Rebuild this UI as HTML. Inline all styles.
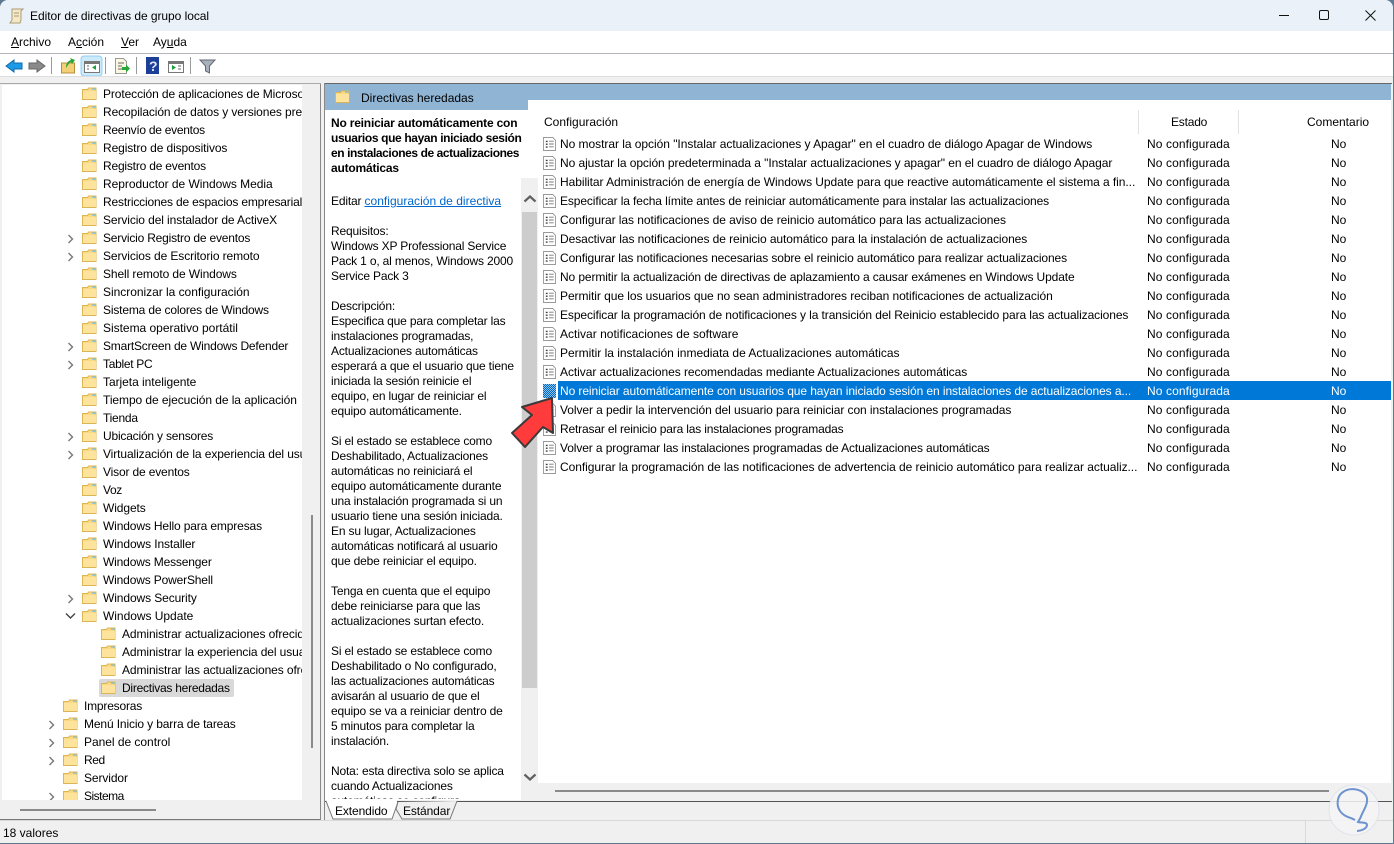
<!DOCTYPE html>
<html lang="es"><head><meta charset="utf-8"><title>Editor de directivas de grupo local</title>
<style>
*{box-sizing:border-box}
html,body{margin:0;padding:0;width:1394px;height:844px;overflow:hidden;background:#5f7a90}
body{font:12px/18px "Liberation Sans",Arial,sans-serif;color:#000}
#w{position:absolute;left:0;top:0;width:1393px;height:843px;background:#f0f0f0;border-radius:8px 8px 0 0;overflow:hidden}
.a{position:absolute}
.t{position:absolute;white-space:nowrap}
#tree{position:absolute;left:2px;top:85px;width:300px;height:715px;background:#fff;overflow:hidden}
#tree div{position:absolute;height:18px;white-space:nowrap;letter-spacing:-.1px}
#tree svg{position:absolute}
#desc{position:absolute;left:331px;top:116px;width:192px;height:683px;overflow:hidden;line-height:15px;white-space:nowrap;letter-spacing:-.17px}
#desc b{letter-spacing:-.2px}
#desc a{color:#0066cc;text-decoration:underline;letter-spacing:.02px}
.r{position:absolute;left:0;width:863px;height:19px;line-height:19px;white-space:nowrap}
.r svg{position:absolute;left:15px;top:3px}
.r .n{position:absolute;left:32px;top:1px}
.r .s{position:absolute;left:619px;top:1px;letter-spacing:.1px}
.r .c{position:absolute;left:803px;top:1px}
</style></head><body>
<svg width="0" height="0" style="position:absolute"><defs>
<symbol id="f" viewBox="0 0 15 14"><path d="M.5 2.500h5l1-1.500h7.500v11.500H.5z" fill="#fbd982" stroke="#dcb655"/><path d="M1 4h13v8H1z" fill="#fde39c"/><path d="M10 1.500h3.500v1.300H10z" fill="#7cc4e8"/></symbol>
<symbol id="d" viewBox="0 0 14 15"><path d="M.5.500h10l3 3v11H.500z" fill="#fff" stroke="#999"/><path d="M3 4h2v1.500H3zM3 7h2v1.500H3zM3 10h2v1.500H3z" fill="#444"/><path d="M6.500 4.500h5M6.500 7.500h5M6.500 10.500h5" stroke="#777" fill="none"/></symbol>
<symbol id="cr" viewBox="0 0 8 10"><path d="M1.500 1l4 4-4 4" fill="none" stroke="#777" stroke-width="1.400"/></symbol>
<pattern id="dt" width="2" height="2" patternUnits="userSpaceOnUse"><rect width="2" height="2" fill="#8cc4f0"/><rect width="1" height="1" fill="#0068c4"/><rect x="1" y="1" width="1" height="1" fill="#0068c4"/></pattern>
</defs></svg>
<div id="w">
<div class="a" style="left:0;top:0;width:1393px;height:31px;background:#eaf1f8"></div>
<svg class="a" style="left:9px;top:8px" width="15" height="16"><path d="M3 1h11l-2 2v9l-1 3H1l2-3z" fill="#f4e9c4" stroke="#a99d77"/><path d="M5 5h5M5 8h5" stroke="#a99d77"/></svg>
<div class="t" style="left:30px;top:7px;letter-spacing:-.05px">Editor de directivas de grupo local</div>
<svg class="a" style="left:1270px;top:5px" width="115" height="22" fill="none" stroke="#111"><path d="M9 10.500h10"/><rect x="49.500" y="5.500" width="9" height="9" rx="1.500"/><path d="M95.500 5.500l10 10M105.500 5.500l-10 10"/></svg>
<div class="a" style="left:0;top:31px;width:1393px;height:22px;background:#fff"></div>
<div class="t" style="left:11px;top:33px"><u>A</u>rchivo</div>
<div class="t" style="left:68px;top:33px">A<u>c</u>ción</div>
<div class="t" style="left:121px;top:33px"><u>V</u>er</div>
<div class="t" style="left:153px;top:33px">Ay<u>u</u>da</div>
<div class="a" style="left:0;top:53px;width:1393px;height:1px;background:#b4b4bc"></div>
<div class="a" style="left:0;top:54px;width:1393px;height:22px;background:#fff"></div>
<div class="a" style="left:0;top:76px;width:1393px;height:1px;background:#dedede"></div>
<svg class="a" style="left:0;top:54px" width="225" height="22">
<path d="M6 12l8-6v3h8v6h-8v3z" fill="#1b9ae8" stroke="#1469a8"/>
<path d="M45 12l-8-6v3h-8v6h8v3z" fill="#8a8a8a" stroke="#666"/>
<path d="M51.500 3v17M105.500 3v17M136.500 3v17M190.500 3v17" stroke="#9a9a9a"/>
<path d="M61.500 9h13v10h-13z" fill="#f3cf76" stroke="#b98f3c"/><path d="M66 14c0-5 2-7 5-8l-1-2 5 2-3 4-1-2c-2 1-3 3-5 6z" fill="#2aa53a"/>
<rect x="81" y="2" width="21" height="20" rx="3" fill="#cdeafb" stroke="#8cd0f5"/>
<path d="M84.500 7.500h15v11h-15z" fill="#fff" stroke="#777"/><path d="M85 8h14v2H85z" fill="#777"/><path d="M87 12h2M87 15h2" stroke="#666"/><path d="M96 11l-4 2.500 4 2.500z" fill="#1f9d3a"/>
<path d="M115.500 4.500h8l3 3v12h-11z" fill="#fbf7e3" stroke="#999"/><path d="M118 9h6M118 12h4M118 15h4" stroke="#666"/><path d="M122 13h4v-2.500l4 4-4 4V16h-4z" fill="#2aa53a"/>
<rect x="146" y="3" width="13" height="17" fill="#1d3f97"/><text x="149" y="17" font-size="14" font-weight="bold" fill="#dfe7fa" font-family="Liberation Sans">?</text>
<path d="M168.500 7.500h15v11h-15z" fill="#fff" stroke="#777"/><path d="M169 8h14v2h-14z" fill="#777"/><path d="M178 12h3M178 15h3" stroke="#666"/><path d="M172 11l4 2.500-4 2.500z" fill="#1f9d3a"/>
<path d="M200 6h15l-5.500 6v7l-4-2v-5z" fill="#a8b2bc" stroke="#667"/>
</svg>
<div id="tree">
<div style="left:101px;top:0">Protección de aplicaciones de Microsoft Defender</div><svg style="left:80px;top:2px" width="15" height="14"><use href="#f"/></svg>
<div style="left:101px;top:18px">Recopilación de datos y versiones preliminares</div><svg style="left:80px;top:20px" width="15" height="14"><use href="#f"/></svg>
<div style="left:101px;top:36px;letter-spacing:-.27px">Reenvío de eventos</div><svg style="left:80px;top:38px" width="15" height="14"><use href="#f"/></svg>
<div style="left:101px;top:54px">Registro de dispositivos</div><svg style="left:80px;top:56px" width="15" height="14"><use href="#f"/></svg>
<div style="left:101px;top:72px;letter-spacing:-.2px">Registro de eventos</div><svg style="left:80px;top:74px" width="15" height="14"><use href="#f"/></svg>
<div style="left:101px;top:90px;letter-spacing:-.04px">Reproductor de Windows Media</div><svg style="left:80px;top:92px" width="15" height="14"><use href="#f"/></svg>
<div style="left:101px;top:108px;letter-spacing:-.17px">Restricciones de espacios empresariales</div><svg style="left:80px;top:110px" width="15" height="14"><use href="#f"/></svg>
<div style="left:101px;top:126px">Servicio del instalador de ActiveX</div><svg style="left:80px;top:128px" width="15" height="14"><use href="#f"/></svg>
<div style="left:101px;top:144px;letter-spacing:-.2px">Servicio Registro de eventos</div><svg style="left:80px;top:146px" width="15" height="14"><use href="#f"/></svg><svg style="left:65px;top:149px" width="8" height="10"><use href="#cr"/></svg>
<div style="left:101px;top:162px">Servicios de Escritorio remoto</div><svg style="left:80px;top:164px" width="15" height="14"><use href="#f"/></svg><svg style="left:65px;top:167px" width="8" height="10"><use href="#cr"/></svg>
<div style="left:101px;top:180px">Shell remoto de Windows</div><svg style="left:80px;top:182px" width="15" height="14"><use href="#f"/></svg>
<div style="left:101px;top:198px;letter-spacing:-.03px">Sincronizar la configuración</div><svg style="left:80px;top:200px" width="15" height="14"><use href="#f"/></svg>
<div style="left:101px;top:216px;letter-spacing:-.17px">Sistema de colores de Windows</div><svg style="left:80px;top:218px" width="15" height="14"><use href="#f"/></svg>
<div style="left:101px;top:234px;letter-spacing:-.02px">Sistema operativo portátil</div><svg style="left:80px;top:236px" width="15" height="14"><use href="#f"/></svg>
<div style="left:101px;top:252px;letter-spacing:-.2px">SmartScreen de Windows Defender</div><svg style="left:80px;top:254px" width="15" height="14"><use href="#f"/></svg><svg style="left:65px;top:257px" width="8" height="10"><use href="#cr"/></svg>
<div style="left:101px;top:270px;letter-spacing:-.3px">Tablet PC</div><svg style="left:80px;top:272px" width="15" height="14"><use href="#f"/></svg><svg style="left:65px;top:275px" width="8" height="10"><use href="#cr"/></svg>
<div style="left:101px;top:288px;letter-spacing:-.04px">Tarjeta inteligente</div><svg style="left:80px;top:290px" width="15" height="14"><use href="#f"/></svg>
<div style="left:101px;top:306px;letter-spacing:-.07px">Tiempo de ejecución de la aplicación</div><svg style="left:80px;top:308px" width="15" height="14"><use href="#f"/></svg>
<div style="left:101px;top:324px;letter-spacing:-.25px">Tienda</div><svg style="left:80px;top:326px" width="15" height="14"><use href="#f"/></svg>
<div style="left:101px;top:342px;letter-spacing:-.2px">Ubicación y sensores</div><svg style="left:80px;top:344px" width="15" height="14"><use href="#f"/></svg><svg style="left:65px;top:347px" width="8" height="10"><use href="#cr"/></svg>
<div style="left:101px;top:360px">Virtualización de la experiencia del usuario</div><svg style="left:80px;top:362px" width="15" height="14"><use href="#f"/></svg><svg style="left:65px;top:365px" width="8" height="10"><use href="#cr"/></svg>
<div style="left:101px;top:378px;letter-spacing:-.16px">Visor de eventos</div><svg style="left:80px;top:380px" width="15" height="14"><use href="#f"/></svg>
<div style="left:101px;top:396px;letter-spacing:-.4px">Voz</div><svg style="left:80px;top:398px" width="15" height="14"><use href="#f"/></svg>
<div style="left:101px;top:414px">Widgets</div><svg style="left:80px;top:416px" width="15" height="14"><use href="#f"/></svg>
<div style="left:101px;top:432px;letter-spacing:-.14px">Windows Hello para empresas</div><svg style="left:80px;top:434px" width="15" height="14"><use href="#f"/></svg>
<div style="left:101px;top:450px">Windows Installer</div><svg style="left:80px;top:452px" width="15" height="14"><use href="#f"/></svg>
<div style="left:101px;top:468px;letter-spacing:-.16px">Windows Messenger</div><svg style="left:80px;top:470px" width="15" height="14"><use href="#f"/></svg>
<div style="left:101px;top:486px;letter-spacing:-.16px">Windows PowerShell</div><svg style="left:80px;top:488px" width="15" height="14"><use href="#f"/></svg>
<div style="left:101px;top:504px">Windows Security</div><svg style="left:80px;top:506px" width="15" height="14"><use href="#f"/></svg><svg style="left:65px;top:509px" width="8" height="10"><use href="#cr"/></svg>
<div style="left:101px;top:522px;letter-spacing:-.03px">Windows Update</div><svg style="left:80px;top:524px" width="15" height="14"><use href="#f"/></svg><svg style="left:63px;top:527px" width="11" height="8"><path d="M1 1.500l4.500 4.500 4.500-4.500" fill="none" stroke="#444" stroke-width="1.400"/></svg>
<div style="left:120px;top:540px">Administrar actualizaciones ofrecidas</div><svg style="left:99px;top:542px" width="15" height="14"><use href="#f"/></svg>
<div style="left:120px;top:558px">Administrar la experiencia del usuario</div><svg style="left:99px;top:560px" width="15" height="14"><use href="#f"/></svg>
<div style="left:120px;top:576px">Administrar las actualizaciones ofrecidas</div><svg style="left:99px;top:578px" width="15" height="14"><use href="#f"/></svg>
<div style="left:97px;top:594px;width:135px;height:18px;background:#d9d9d9;border-radius:2px"></div>
<div style="left:120px;top:594px;letter-spacing:-.25px">Directivas heredadas</div><svg style="left:99px;top:596px" width="15" height="14"><use href="#f"/></svg>
<div style="left:82px;top:612px;letter-spacing:-.2px">Impresoras</div><svg style="left:61px;top:614px" width="15" height="14"><use href="#f"/></svg>
<div style="left:82px;top:630px;letter-spacing:-.13px">Menú Inicio y barra de tareas</div><svg style="left:61px;top:632px" width="15" height="14"><use href="#f"/></svg><svg style="left:46px;top:635px" width="8" height="10"><use href="#cr"/></svg>
<div style="left:82px;top:648px;letter-spacing:-.03px">Panel de control</div><svg style="left:61px;top:650px" width="15" height="14"><use href="#f"/></svg><svg style="left:46px;top:653px" width="8" height="10"><use href="#cr"/></svg>
<div style="left:82px;top:666px;letter-spacing:-.4px">Red</div><svg style="left:61px;top:668px" width="15" height="14"><use href="#f"/></svg><svg style="left:46px;top:671px" width="8" height="10"><use href="#cr"/></svg>
<div style="left:82px;top:684px">Servidor</div><svg style="left:61px;top:686px" width="15" height="14"><use href="#f"/></svg>
<div style="left:82px;top:702px;letter-spacing:-.5px">Sistema</div><svg style="left:61px;top:704px" width="15" height="14"><use href="#f"/></svg><svg style="left:46px;top:707px" width="8" height="10"><use href="#cr"/></svg>
</div>
<div class="a" style="left:311px;top:515px;width:2px;height:233px;background:#8a8a8a"></div>
<div class="a" style="left:20px;top:809px;width:136px;height:2px;background:#8a8a8a"></div>
<div class="a" style="left:0;top:819px;width:321px;height:1px;background:#777"></div>
<div class="a" style="left:320px;top:83px;width:1px;height:737px;background:#888"></div>
<div class="a" style="left:324px;top:83px;width:1px;height:737px;background:#888"></div>
<div class="a" style="left:0;top:83px;width:321px;height:1px;background:#aaa"></div>
<div class="a" style="left:325px;top:83px;width:1067px;height:1px;background:#666"></div>
<div class="a" style="left:325px;top:84px;width:1066px;height:716px;background:#fff"></div>
<div class="a" style="left:325px;top:84px;width:1066px;height:16px;background:#8fb4d4"></div>
<div class="a" style="left:325px;top:100px;width:203px;height:10px;background:#8fb4d4"></div>
<div class="a" style="left:528px;top:100px;width:8px;height:10px;background:#fff;border-radius:8px 0 0 0"></div>
<svg class="a" style="left:335px;top:90px" width="15" height="14"><use href="#f"/></svg>
<div class="t" style="left:361px;top:89px">Directivas heredadas</div>
<div id="desc"><b>No reiniciar automáticamente con<br><span style="letter-spacing:-.36px">usuarios que hayan iniciado sesión</span><br><span style="letter-spacing:-.42px">en instalaciones de actualizaciones</span><br>automáticas</b><br><br><span style="display:block;height:3px"></span>Editar <a>configuración de directiva</a><br><br>Requisitos:<br>Windows XP Professional Service<br>Pack 1 o, al menos, Windows 2000<br>Service Pack 3<br><br>Descripción:<br>Especifica que para completar las<br>instalaciones programadas,<br>Actualizaciones automáticas<br>esperará a que el usuario que tiene<br>iniciada la sesión reinicie el<br>equipo, en lugar de reiniciar el<br>equipo automáticamente.<br><br>Si el estado se establece como<br>Deshabilitado, Actualizaciones<br>automáticas no reiniciará el<br>equipo automáticamente durante<br>una instalación programada si un<br>usuario tiene una sesión iniciada.<br>En su lugar, Actualizaciones<br>automáticas notificará al usuario<br>que debe reiniciar el equipo.<br><br>Tenga en cuenta que el equipo<br>debe reiniciarse para que las<br>actualizaciones surtan efecto.<br><br>Si el estado se establece como<br>Deshabilitado o No configurado,<br>las actualizaciones automáticas<br>avisarán al usuario de que el<br>equipo se va a reiniciar dentro de<br>5 minutos para completar la<br>instalación.<br><br>Nota: esta directiva solo se aplica<br>cuando Actualizaciones<br>automáticas se configura</div>
<div class="a" style="left:521px;top:178px;width:17px;height:622px;background:#f0f0f0"></div>
<div class="a" style="left:522px;top:212px;width:15px;height:476px;background:#cdcdcd"></div>
<svg class="a" style="left:523px;top:194px" width="14" height="10"><path d="M1.500 7.500l5.500-5 5.500 5" fill="none" stroke="#606060" stroke-width="2.200"/></svg>
<svg class="a" style="left:523px;top:772px" width="14" height="10"><path d="M1.500 2.500l5.500 5 5.500-5" fill="none" stroke="#606060" stroke-width="2.200"/></svg>
<div class="t" style="left:544px;top:113px">Configuración</div>
<div class="t" style="left:1171px;top:113px;letter-spacing:-.2px">Estado</div>
<div class="t" style="left:1307px;top:113px">Comentario</div>
<div class="a" style="left:1138px;top:110px;width:1px;height:24px;background:#e2e2e2"></div>
<div class="a" style="left:1238px;top:110px;width:1px;height:24px;background:#e2e2e2"></div>
<div class="a" style="left:528px;top:134px;width:863px;height:360px">
<div class="r" style="top:0"><svg width="13" height="14"><use href="#d"/></svg><span class="n" style="letter-spacing:-.04px">No mostrar la opción "Instalar actualizaciones y Apagar" en el cuadro de diálogo Apagar de Windows</span><span class="s">No configurada</span><span class="c">No</span></div>
<div class="r" style="top:19px"><svg width="13" height="14"><use href="#d"/></svg><span class="n" style="letter-spacing:-.07px">No ajustar la opción predeterminada a "Instalar actualizaciones y apagar" en el cuadro de diálogo Apagar</span><span class="s">No configurada</span><span class="c">No</span></div>
<div class="r" style="top:38px"><svg width="13" height="14"><use href="#d"/></svg><span class="n" style="letter-spacing:-.06px">Habilitar Administración de energía de Windows Update para que reactive automáticamente el sistema a fin...</span><span class="s">No configurada</span><span class="c">No</span></div>
<div class="r" style="top:57px"><svg width="13" height="14"><use href="#d"/></svg><span class="n" style="letter-spacing:-.11px">Especificar la fecha límite antes de reiniciar automáticamente para instalar las actualizaciones</span><span class="s">No configurada</span><span class="c">No</span></div>
<div class="r" style="top:76px"><svg width="13" height="14"><use href="#d"/></svg><span class="n" style="letter-spacing:-.05px">Configurar las notificaciones de aviso de reinicio automático para las actualizaciones</span><span class="s">No configurada</span><span class="c">No</span></div>
<div class="r" style="top:95px"><svg width="13" height="14"><use href="#d"/></svg><span class="n" style="letter-spacing:-.07px">Desactivar las notificaciones de reinicio automático para la instalación de actualizaciones</span><span class="s">No configurada</span><span class="c">No</span></div>
<div class="r" style="top:114px"><svg width="13" height="14"><use href="#d"/></svg><span class="n" style="letter-spacing:-.1px">Configurar las notificaciones necesarias sobre el reinicio automático para realizar actualizaciones</span><span class="s">No configurada</span><span class="c">No</span></div>
<div class="r" style="top:133px"><svg width="13" height="14"><use href="#d"/></svg><span class="n" style="letter-spacing:-.11px">No permitir la actualización de directivas de aplazamiento a causar exámenes en Windows Update</span><span class="s">No configurada</span><span class="c">No</span></div>
<div class="r" style="top:152px"><svg width="13" height="14"><use href="#d"/></svg><span class="n" style="letter-spacing:-.06px">Permitir que los usuarios que no sean administradores reciban notificaciones de actualización</span><span class="s">No configurada</span><span class="c">No</span></div>
<div class="r" style="top:171px"><svg width="13" height="14"><use href="#d"/></svg><span class="n" style="letter-spacing:-.09px">Especificar la programación de notificaciones y la transición del Reinicio establecido para las actualizaciones</span><span class="s">No configurada</span><span class="c">No</span></div>
<div class="r" style="top:190px"><svg width="13" height="14"><use href="#d"/></svg><span class="n" style="letter-spacing:.01px">Activar notificaciones de software</span><span class="s">No configurada</span><span class="c">No</span></div>
<div class="r" style="top:209px"><svg width="13" height="14"><use href="#d"/></svg><span class="n" style="letter-spacing:-.01px">Permitir la instalación inmediata de Actualizaciones automáticas</span><span class="s">No configurada</span><span class="c">No</span></div>
<div class="r" style="top:228px"><svg width="13" height="14"><use href="#d"/></svg><span class="n" style="letter-spacing:-.06px">Activar actualizaciones recomendadas mediante Actualizaciones automáticas</span><span class="s">No configurada</span><span class="c">No</span></div>
<div class="a" style="left:30px;top:247px;width:833px;height:19px;background:#0078d7"></div>
<div class="r" style="top:247px;color:#fff"><svg width="13" height="14"><rect width="13" height="14" fill="url(#dt)"/></svg><span class="n" style="letter-spacing:-.085px">No reiniciar automáticamente con usuarios que hayan iniciado sesión en instalaciones de actualizaciones a...</span><span class="s">No configurada</span><span class="c">No</span></div>
<div class="r" style="top:266px"><svg width="13" height="14"><use href="#d"/></svg><span class="n" style="letter-spacing:-.08px">Volver a pedir la intervención del usuario para reiniciar con instalaciones programadas</span><span class="s">No configurada</span><span class="c">No</span></div>
<div class="r" style="top:285px"><svg width="13" height="14"><use href="#d"/></svg><span class="n" style="letter-spacing:-.17px">Retrasar el reinicio para las instalaciones programadas</span><span class="s">No configurada</span><span class="c">No</span></div>
<div class="r" style="top:304px"><svg width="13" height="14"><use href="#d"/></svg><span class="n" style="letter-spacing:-.11px">Volver a programar las instalaciones programadas de Actualizaciones automáticas</span><span class="s">No configurada</span><span class="c">No</span></div>
<div class="r" style="top:323px"><svg width="13" height="14"><use href="#d"/></svg><span class="n" style="letter-spacing:-.05px">Configurar la programación de las notificaciones de advertencia de reinicio automático para realizar actualiz...</span><span class="s">No configurada</span><span class="c">No</span></div>
</div>
<div class="a" style="left:538px;top:783px;width:853px;height:17px;background:#f0f0f0"></div>
<div class="a" style="left:555px;top:790px;width:774px;height:2px;background:#8a8a8a"></div>
<div class="a" style="left:325px;top:800px;width:1067px;height:20px;background:#f0f0f0"></div>
<div class="a" style="left:325px;top:801px;width:1067px;height:1px;background:#555"></div>
<svg class="a" style="left:325px;top:800px" width="140" height="21"><path d="M1 1l7 18h59L73 2" fill="#fff" stroke="#777"/><path d="M2 1h70" stroke="#fff" stroke-width="2"/><path d="M73 2l-2 7 6 10h48l7-18" fill="#f0f0f0" stroke="#777"/></svg>
<div class="t" style="left:335px;top:802px;letter-spacing:-.1px">Extendido</div>
<div class="t" style="left:403px;top:802px;letter-spacing:-.1px">Estándar</div>
<div class="a" style="left:0;top:820px;width:1393px;height:1px;background:#d9d9d9"></div>
<div class="a" style="left:1305px;top:821px;width:1px;height:23px;background:#d9d9d9"></div>
<div class="t" style="left:3px;top:824px">18 valores</div>
<svg class="a" style="left:505px;top:392px" width="60" height="60"><path d="M47 6L17 15 27 23 7 41 20 55 38 35 48 41z" fill="#ff3b3b" stroke="#3a3a3a" stroke-width="2" stroke-linejoin="round"/></svg>
<svg class="a" style="left:1328px;top:784px" width="52" height="52"><circle cx="26" cy="26" r="25" fill="#f4f4f6" fill-opacity=".85" stroke="#dfe3ea"/><path d="M27 36C22 33 16 33 12 27C8 21 9 12 15 8C22 3 32 5 37 10C42 16 37 24 34 30C33 33 32 35 30 38C34 39 39 38 39 41C39 45 32 47 29 47" fill="none" stroke="#6d93cf" stroke-width="2"/></svg>
</div>
</body></html>
